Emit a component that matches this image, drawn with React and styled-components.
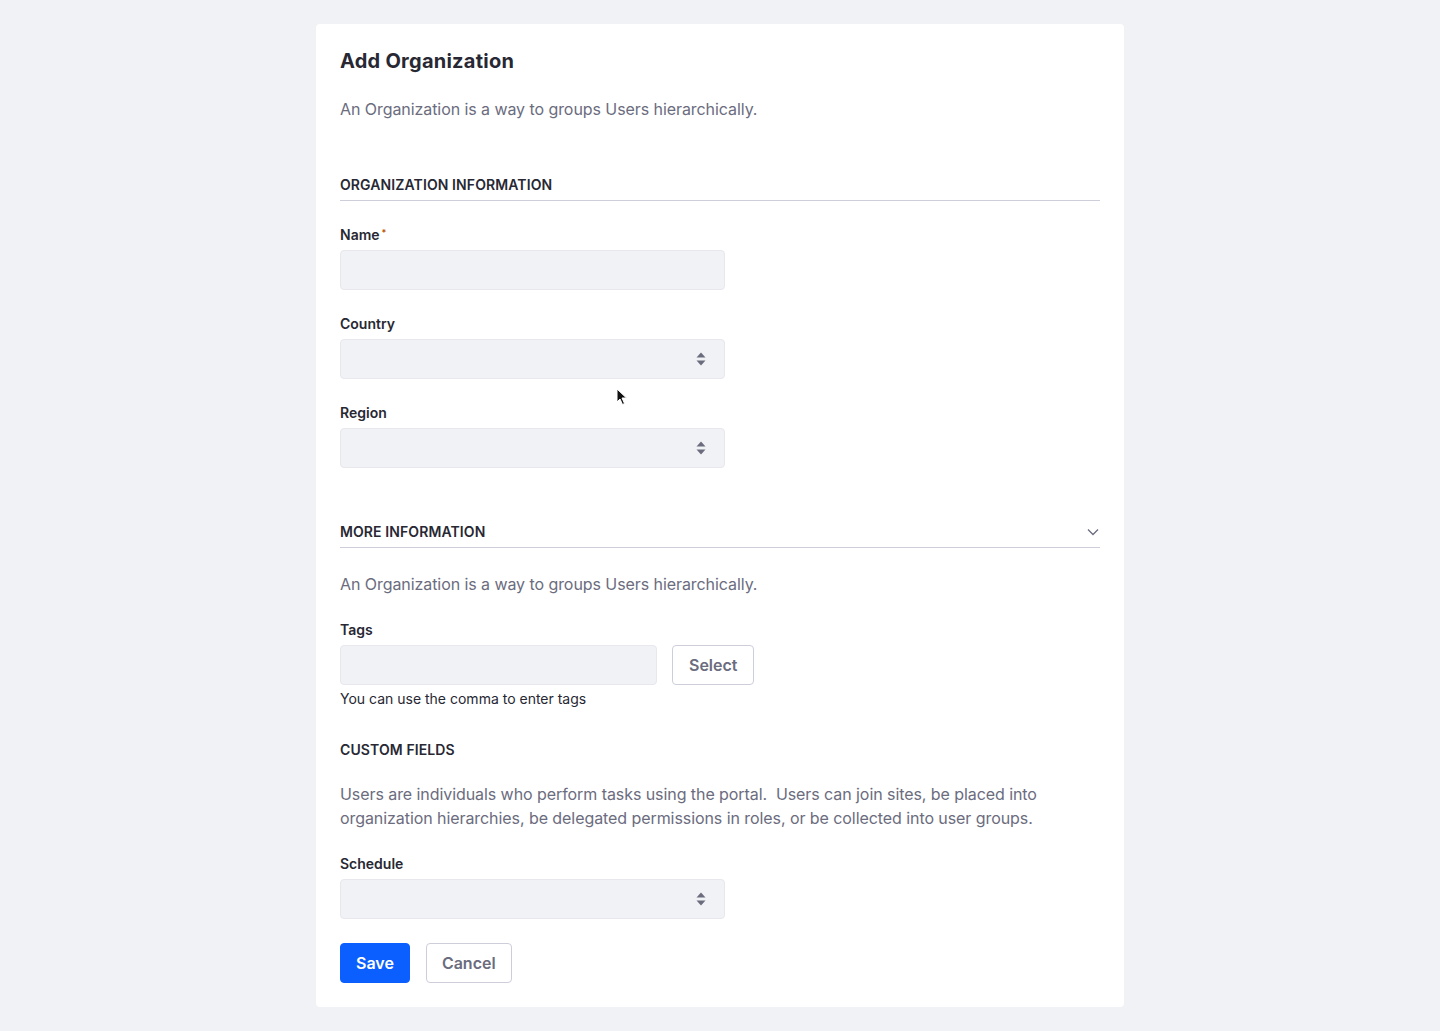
import React from "react";
import styled, { createGlobalStyle } from "styled-components";

const GlobalStyle = createGlobalStyle`
  html, body {
    margin: 0;
    padding: 0;
    background: #f1f2f5;
  }
  body {
    font-family: Inter, "Noto Sans", "Liberation Sans", sans-serif;
    color: #272833;
    -webkit-font-smoothing: antialiased;
  }
`;

const Page = styled.div`
  position: relative;
  min-height: 1031px;
  padding-top: 24px;
  box-sizing: border-box;
`;

const Card = styled.form`
  width: 808px;
  margin: 0 auto;
  background: #fff;
  border-radius: 4px;
  padding: 24px;
  box-sizing: border-box;
`;

const Title = styled.h1`
  margin: 1px 0 24px;
  font-size: 20px;
  line-height: 24px;
  font-weight: 700;
  letter-spacing: 0.25px;
  color: #272833;
`;

const Text = styled.p`
  margin: 0 0 ${(p) => p.$mb || 24}px;
  font-size: 16px;
  line-height: 24px;
  letter-spacing: -0.07px;
  color: #6b6c7e;
`;

const SectionHeader = styled.div`
  display: flex;
  align-items: center;
  justify-content: space-between;
  margin: 0 0 ${(p) => p.$mb || 24}px;
  padding-bottom: ${(p) => (p.$line ? 5 : 0)}px;
  border-bottom: ${(p) => (p.$line ? "1px solid #cdced9" : "none")};
  font-size: 14px;
  line-height: 20px;
  font-weight: 600;
  letter-spacing: 0.1px;
  color: #272833;
  text-transform: uppercase;
`;

const Group = styled.div`
  margin-bottom: ${(p) => (p.$mb === undefined ? 24 : p.$mb)}px;
`;

const Label = styled.label`
  display: block;
  margin-bottom: 5px;
  font-size: 14px;
  line-height: 20px;
  font-weight: 600;
  color: #272833;
`;

const Required = styled.span`
  color: #b95000;
  font-size: 9px;
  vertical-align: top;
  margin-left: 2px;
  line-height: 16px;
`;

const Input = styled.div`
  width: ${(p) => p.$width || 385}px;
  height: 40px;
  box-sizing: border-box;
  background: #f1f2f5;
  border: 1px solid #e7e7ed;
  border-radius: 4px;
`;

const SelectBox = styled(Input)`
  display: flex;
  align-items: center;
  justify-content: flex-end;
  padding-right: 18px;
  color: #6b6c7e;
`;

const Row = styled.div`
  display: flex;
  align-items: center;
  gap: 15px;
`;

const Help = styled.div`
  margin-top: 4px;
  font-size: 14px;
  line-height: 20px;
  color: #272833;
`;

const Button = styled.button`
  height: 40px;
  box-sizing: border-box;
  padding: 0 ${(p) => (p.$wide ? 16 : 15)}px;
  border-radius: 4px;
  font-family: inherit;
  font-size: 16px;
  font-weight: 600;
  border: 1px solid ${(p) => (p.$primary ? "#0b5fff" : "#cdced9")};
  background: ${(p) => (p.$primary ? "#0b5fff" : "#fff")};
  color: ${(p) => (p.$primary ? "#fff" : "#6b6c7e")};
  cursor: pointer;
`;

const Actions = styled.div`
  display: flex;
  gap: 16px;
`;

const Cursor = styled.svg`
  position: absolute;
  left: 616px;
  top: 388px;
`;

const Caret = () => (
  <svg width="10" height="16" viewBox="0 0 10 16">
    <path d="M5 1.5 L9.5 6.5 H0.5 Z" fill="currentColor" />
    <path d="M5 14.5 L9.5 9.5 H0.5 Z" fill="currentColor" />
  </svg>
);

const Chevron = () => (
  <svg width="12" height="8" viewBox="0 0 12 8" style={{ marginRight: 1 }}>
    <path d="M1 1.5 L6 6.5 L11 1.5" fill="none" stroke="#6b6c7e" strokeWidth="1.3" />
  </svg>
);

const Select = () => (
  <SelectBox>
    <Caret />
  </SelectBox>
);

export default function App() {
  return (
    <Page>
      <GlobalStyle />
      <Card onSubmit={(e) => e.preventDefault()}>
        <Title>Add Organization</Title>
        <Text $mb={54}>An Organization is a way to groups Users hierarchically.</Text>

        <SectionHeader $line>Organization Information</SectionHeader>
        <Group>
          <Label>
            Name<Required>*</Required>
          </Label>
          <Input />
        </Group>
        <Group>
          <Label>Country</Label>
          <Select />
        </Group>
        <Group $mb={54}>
          <Label>Region</Label>
          <Select />
        </Group>

        <SectionHeader $line>
          More Information
          <Chevron />
        </SectionHeader>
        <Text>An Organization is a way to groups Users hierarchically.</Text>
        <Group $mb={31}>
          <Label>Tags</Label>
          <Row>
            <Input $width={317} />
            <Button type="button" $wide>Select</Button>
          </Row>
          <Help>You can use the comma to enter tags</Help>
        </Group>

        <SectionHeader $mb={22}>Custom Fields</SectionHeader>
        <Text>
          Users are individuals who perform tasks using the portal.&nbsp; Users can join sites, be placed into
          organization hierarchies, be delegated permissions in roles, or be collected into user groups.
        </Text>
        <Group>
          <Label>Schedule</Label>
          <Select />
        </Group>
        <Actions>
          <Button $primary type="submit">Save</Button>
          <Button type="button">Cancel</Button>
        </Actions>
      </Card>
      <Cursor width="12" height="18" viewBox="0 0 12 18">
        <path d="M1 1 L1 14 L4 11 L6.5 16.5 L8.5 15.5 L6 10 L10.5 10 Z" fill="#111" stroke="#fff" strokeWidth="1" />
      </Cursor>
    </Page>
  );
}
